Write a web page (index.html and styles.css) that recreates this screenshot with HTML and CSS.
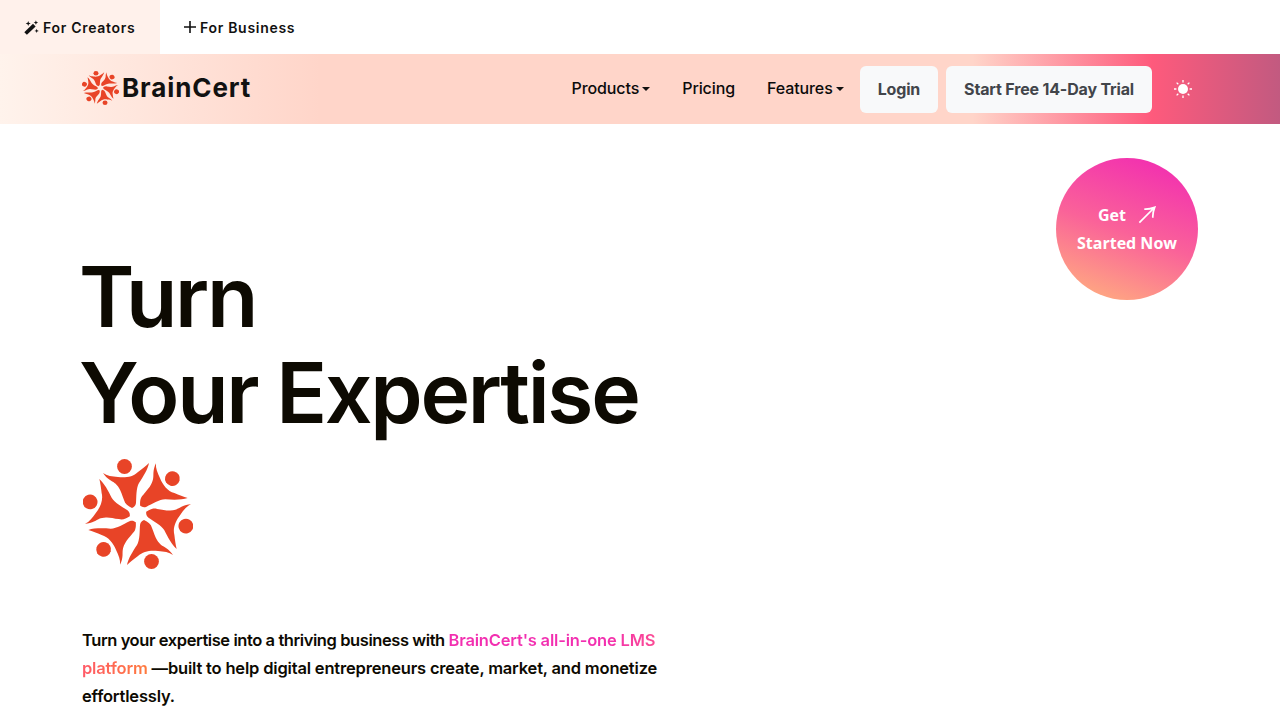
FILE: index.html
```html
<!DOCTYPE html>
<html lang="en">
<head>
    <meta charset="UTF-8">
    <meta name="viewport" content="width=device-width, initial-scale=1.0">
    <title>BrainCert</title>
    <link rel="stylesheet" href="styles.css">
</head>
<body>

    <svg class="defs" width="0" height="0" aria-hidden="true">
        <defs>
            <g id="figure">
                <circle cx="-13.5" cy="-47.5" r="7.4"/>
                <path d="M-35,-41 C-31,-38 -26,-37.5 -20,-37 C-13,-36 -5,-37 0,-42 C4,-45 8,-48 11,-51 C10,-45 5,-37 1,-31 C-2,-26 -1.5,-17 -2,-11 C-2.5,-8 -4,-7 -6,-6 C-10,-8 -13,-10 -14,-14 C-16,-19 -17,-23 -19,-26 C-22,-31 -25,-32 -28,-34 C-31,-36 -33,-38 -35,-41 Z"/>
            </g>
            <g id="mark">
                <use href="#figure"/>
                <use href="#figure" transform="rotate(60)"/>
                <use href="#figure" transform="rotate(120)"/>
                <use href="#figure" transform="rotate(180)"/>
                <use href="#figure" transform="rotate(240)"/>
                <use href="#figure" transform="rotate(300)"/>
            </g>
        </defs>
    </svg>

    <!-- Audience tabs -->
    <div class="tabs">
        <a class="tab active">
            <svg class="tab-icon" viewBox="0 0 16 16">
                <path d="M0.3 13 L9.6 4 L12.4 6.8 L3.1 15.8 Z"/>
                <path d="M4.5 1 L5.2 3 L7.2 3.7 L5.2 4.4 L4.5 6.4 L3.8 4.4 L1.8 3.7 L3.8 3 Z"/>
                <path d="M12.7 0.3 L13.4 2 L15.1 2.7 L13.4 3.4 L12.7 5.1 L12 3.4 L10.3 2.7 L12 2 Z"/>
                <path d="M13.5 9.3 L14.1 11 L15.8 11.6 L14.1 12.2 L13.5 13.9 L12.9 12.2 L11.2 11.6 L12.9 11 Z"/>
            </svg>
            For Creators
        </a>
        <a class="tab">
            <svg class="plus-icon" viewBox="0 0 12 12">
                <path d="M6 0 V12 M0 6 H12"/>
            </svg>
            For Business
        </a>
    </div>

    <!-- Navbar -->
    <nav class="navbar">
        <a class="logo">
            <svg class="logo-mark" viewBox="-55 -55 110 110" preserveAspectRatio="none"><use href="#mark"/></svg>
            <span class="logo-text">BrainCert</span>
        </a>
        <div class="nav-links">
            <a class="nav-link">Products<span class="caret"></span></a>
            <a class="nav-link">Pricing</a>
            <a class="nav-link">Features<span class="caret"></span></a>
            <a class="nav-btn">Login</a>
            <a class="nav-btn">Start Free 14-Day Trial</a>
            <svg class="sun" viewBox="0 0 18 18">
                <circle class="sun-core" cx="9" cy="9" r="5"/>
                <path d="M9 0 V2.4 M9 15.6 V18 M0 9 H2.4 M15.6 9 H18 M2.6 2.6 L4.3 4.3 M13.7 13.7 L15.4 15.4 M2.6 15.4 L4.3 13.7 M13.7 4.3 L15.4 2.6"/>
            </svg>
        </div>
    </nav>

    <!-- Hero -->
    <main class="hero">
        <div class="hero-text">
            <h1>Turn<br>Your Expertise</h1>
            <svg class="hero-mark" viewBox="-55 -55 110 110"><use href="#mark"/></svg>
            <p><span class="lead">Turn your expertise into a thriving business with </span><span class="highlight">BrainCert's all-in-one LMS</span> <span class="highlight-end">platform</span> &mdash;built to help digital entrepreneurs create, market, and monetize effortlessly.</p>
        </div>
        <a class="get-started">
            <span class="get-line">Get
                <svg class="arrow" viewBox="0 0 20 20">
                    <path d="M1.5 18.5 L17.5 2.5 M7 3.5 C11 3.8 14.5 3 18.5 1.5 C17 5.5 16.2 9 16.5 13"/>
                </svg>
            </span>
            <span>Started Now</span>
        </a>
    </main>

</body>
</html>
```

FILE: styles.css
```css
body {
    font-family: "Inter", "Liberation Sans", sans-serif;
    background-color: white;
    color: #0d0a02;
    margin: 0;
    height: 720px;
    overflow: hidden;
}
a {
    text-decoration: none;
    color: inherit;
}
.defs {
    position: absolute;
}

/* tabs */
.tabs {
    display: flex;
    height: 54px;
}
.tab {
    display: flex;
    align-items: center;
    padding: 0 24px;
    font-size: 14px;
    font-weight: 600;
    letter-spacing: 0.7px;
    color: #111;
}
.tab.active {
    width: 112px;
    background-color: #fff1eb;
}
.tab-icon {
    width: 15px;
    height: 15px;
    margin-right: 4px;
    fill: #111;
}
.plus-icon {
    width: 12px;
    height: 12px;
    margin-right: 4px;
    fill: none;
    stroke: #111;
    stroke-width: 1.6;
}

/* navbar */
.navbar {
    display: flex;
    align-items: center;
    justify-content: space-between;
    height: 70px;
    padding: 0 82px;
    background: linear-gradient(90deg, #fff3ec 0%, #ffd5c9 25%, #ffd5c9 76%, #fe5a7c 90%, #c25a80 100%);
}
.logo {
    display: flex;
    align-items: center;
    gap: 3px;
    margin-bottom: 3px;
}
.logo-mark {
    width: 37px;
    height: 34px;
    fill: #e84427;
}
.logo-text {
    font-size: 26px;
    font-weight: 700;
    letter-spacing: 0.9px;
    color: #111;
}
.nav-links {
    display: flex;
    align-items: center;
    margin-right: 6px;
}
.nav-link {
    display: flex;
    align-items: center;
    padding: 0 16px;
    margin-bottom: 2px;
    font-size: 16px;
    font-weight: 500;
    letter-spacing: -0.1px;
    color: #0b0b0b;
}
.caret {
    width: 0;
    height: 0;
    margin-left: 3px;
    margin-top: 2px;
    border-top: 4px solid #111;
    border-left: 4px solid transparent;
    border-right: 4px solid transparent;
}
.nav-btn {
    padding: 0 18px;
    height: 47px;
    line-height: 47px;
    font-size: 16px;
    font-weight: 700;
    letter-spacing: -0.17px;
    color: #42454a;
    background-color: #f8f9fa;
    border-radius: 6px;
}
.nav-btn + .nav-btn {
    margin-left: 8px;
}
.sun {
    width: 18px;
    height: 18px;
    margin-left: 22px;
    fill: none;
    stroke: white;
    stroke-width: 1.3;
}
.sun-core {
    fill: white;
    stroke: none;
}

/* hero */
.hero {
    display: flex;
    justify-content: space-between;
    align-items: flex-start;
    padding: 34px 82px 0;
}
.hero-text {
    width: 580px;
    padding-top: 91px;
}
h1 {
    margin: 0 0 0 -3px;
    font-size: 84px;
    font-weight: 600;
    line-height: 96px;
    letter-spacing: -2.3px;
    white-space: nowrap;
    color: #0d0a02;
}
.hero-mark {
    display: block;
    width: 110px;
    height: 110px;
    margin: 18px 0 57px 1px;
    fill: #e84427;
}
p {
    margin: 0;
    font-size: 16.5px;
    font-weight: 600;
    line-height: 28px;
    letter-spacing: -0.18px;
    color: #0d0a02;
}
.lead {
    letter-spacing: -0.42px;
}
.highlight,
.highlight-end {
    -webkit-background-clip: text;
    background-clip: text;
    color: transparent;
}
.highlight {
    background-image: linear-gradient(90deg, #f22fb0 0%, #f22fb0 75%, #fb4a94 100%);
}
.highlight-end {
    background-image: linear-gradient(90deg, #ff5a68 0%, #ff7a3c 100%);
}
.get-started {
    display: flex;
    flex-direction: column;
    align-items: center;
    justify-content: center;
    gap: 6px;
    width: 142px;
    height: 142px;
    border-radius: 50%;
    font-family: "Open Sans", sans-serif;
    font-size: 16px;
    font-weight: 700;
    line-height: 22px;
    color: white;
    background: linear-gradient(200deg, #f22fb0 8%, #fa6299 52%, #ffac80 94%);
}
.get-line {
    display: flex;
    align-items: center;
    gap: 12px;
}
.arrow {
    width: 18px;
    height: 18px;
    fill: none;
    stroke: white;
    stroke-width: 1.9;
}
```
